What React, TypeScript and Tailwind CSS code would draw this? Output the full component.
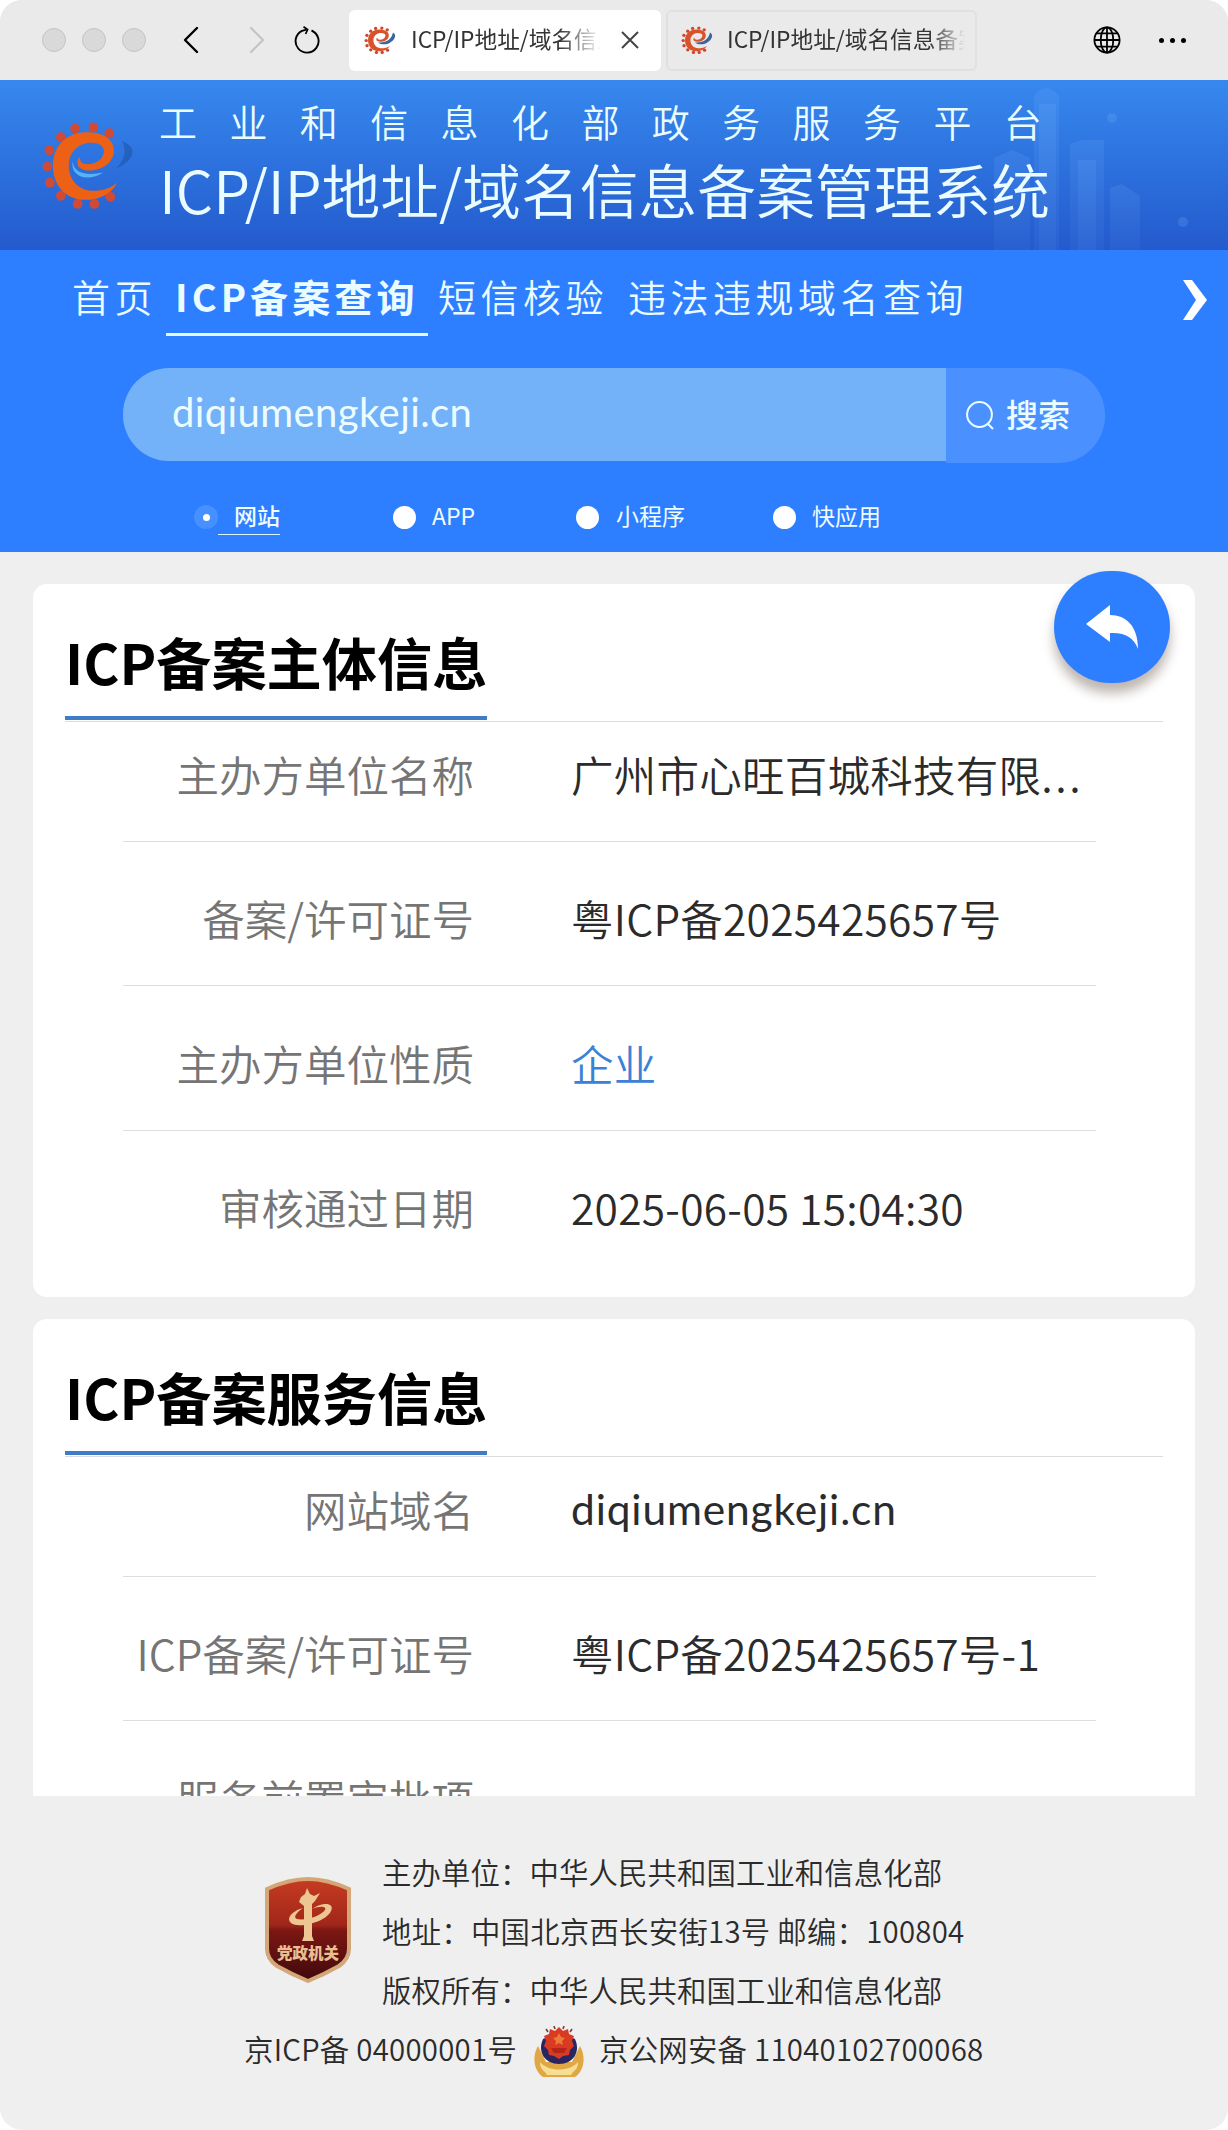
import React from 'react'
import { ChevronLeft, ChevronRight } from 'lucide-react'
import clsx from 'clsx'

interface Field {
    label: string
    value?: string
    link?: boolean
    domain?: boolean
    clipped?: boolean
}

const subjectFields: Field[] = [
    { label: '主办方单位名称', value: '广州市心旺百城科技有限', clipped: true },
    { label: '备案/许可证号', value: '粤ICP备2025425657号' },
    { label: '主办方单位性质', value: '企业', link: true },
    { label: '审核通过日期', value: '2025-06-05 15:04:30' },
]

const serviceFields: Field[] = [
    { label: '网站域名', value: 'diqiumengkeji.cn', domain: true },
    { label: 'ICP备案/许可证号', value: '粤ICP备2025425657号-1' },
    { label: '服务前置审批项' },
]

// Teeth of the gear around the "e", open on the right side
const teeth = [
    [62, 9], [46, 3.5], [27.5, 4.5], [13, 13], [1.5, 26], [-0.5, 42],
    [2, 58], [13, 71], [30, 79], [47, 79], [63, 72],
]

function GearLogo({ className, onDark }: { className?: string; onDark?: boolean }) {
    return (
        <svg viewBox="-7 -3 98 90" preserveAspectRatio="none" className={className}>
            <g fill={onDark ? '#cf4a37' : '#d0452c'}>
                {teeth.map(([x, y]) => (
                    <circle key={`${x}-${y}`} cx={x} cy={y} r="4.9" />
                ))}
            </g>
            <path
                d="M70 58C64 70 50 75 38 75C16 75 5 59 5 41C5 22 19 8.5 38 8.2C56 8 67 15 66.6 27C66 40 52 46.5 41 46C31 45.5 27 40 32 32C32 38 36 40 42 39.5C51 39 57 33 56.5 26C56 20 49 18 41 18.5C29 20 21 29 21 41C21 55 31 65.5 44 66C54 66 63 64 70 58Z"
                fill={onDark ? '#ec6116' : '#d9532a'}
            />
            {onDark ? (
                <>
                    <path d="M25 36C25 47 36 52 56 48C40 58 22 52 25 36Z" fill="#56b4f5" />
                    <path d="M75 17C83 20 87 24 85 30C83 37 76 41 69 44C77 36 80 27 75 17Z" fill="#174f9e" opacity=".5" />
                </>
            ) : (
                <path d="M34 48C60 50 76 36 79 17C92 24 84 44 66 51C54 56 42 54 34 48Z" fill="#3c659f" />
            )}
        </svg>
    )
}

function BrowserTab({ active }: { active?: boolean }) {
    return (
        <div
            className={clsx(
                'flex h-[61px] items-center rounded-md',
                active ? 'w-[312px] bg-white pl-[15px]' : 'w-[311px] border-2 border-[#e0e0e0] pl-[13px]'
            )}
        >
            <GearLogo className="h-[29px] w-[33px] shrink-0" />
            <span
                className={clsx(
                    "overflow-hidden pb-[3px] font-['Noto_Sans_CJK_SC'] text-[22.7px] leading-[34px] whitespace-nowrap text-[#333]",
                    active
                        ? 'ml-[14px] w-[190px] [mask-image:linear-gradient(to_right,#000_78%,transparent)]'
                        : 'ml-[13px] w-[238px] [mask-image:linear-gradient(to_right,#000_85%,transparent)]'
                )}
            >
                ICP/IP地址/域名信息备案
            </span>
            {active && (
                <svg viewBox="0 0 18 18" className="ml-[20px] h-[18px] w-[18px]" stroke="#444" strokeWidth="2" fill="none">
                    <path d="M1 1 17 17M17 1 1 17" />
                </svg>
            )}
        </div>
    )
}

function BrowserBar() {
    return (
        <div className="flex h-20 items-center bg-[#eaeaea]">
            <div className="ml-[42px] flex gap-4">
                {[0, 1, 2].map((i) => (
                    <span key={i} className="h-6 w-6 rounded-full border border-[#c3c3c3] bg-[#d9d9d9]" />
                ))}
            </div>
            <ChevronLeft className="ml-[21px] h-[48px] w-[48px]" strokeWidth={1.2} color="#000" />
            <ChevronRight className="ml-[18px] h-[48px] w-[48px]" strokeWidth={1.1} color="#c4c4c4" />
            <svg viewBox="0 0 26 28" className="ml-[13px] h-[28px] w-[26px]" fill="none" stroke="#000" strokeWidth="1.9">
                <path d="M17.5 4.5A11.5 11.5 0 1 1 8 4.8L12.5 3.6" />
                <path d="M9.5 0.8 13.6 3.6 11.6 8" strokeWidth="1.7" />
            </svg>
            <div className="ml-[29px] flex gap-[5px]">
                <BrowserTab active />
                <BrowserTab />
            </div>
            <svg viewBox="0 0 28 28" className="ml-[116px] h-[28px] w-[28px]" fill="none" stroke="#000" strokeWidth="1.8">
                <circle cx="14" cy="14" r="12.6" />
                <ellipse cx="14" cy="14" rx="6.3" ry="12.6" />
                <path d="M14 1.4V26.6M1.4 14H26.6M3.5 7.3H24.5M3.5 20.7H24.5" />
            </svg>
            <div className="ml-[38px] flex gap-[6px]">
                {[0, 1, 2].map((i) => (
                    <span key={i} className="h-[5px] w-[5px] rounded-full bg-black" />
                ))}
            </div>
        </div>
    )
}

// Faint skyline behind the right end of the banner
function Skyline() {
    return (
        <svg viewBox="0 0 240 170" className="absolute right-0 top-0 h-[170px] w-[240px]">
            <defs>
                <linearGradient id="tower" x1="0" y1="0" x2="0" y2="1">
                    <stop offset="0" stopColor="#7db8ff" stopOpacity=".14" />
                    <stop offset="1" stopColor="#7db8ff" stopOpacity=".06" />
                </linearGradient>
            </defs>
            <g fill="url(#tower)">
                <path d="M46 170V16Q58 0 71 16V170Z" />
                <path d="M51 170V24H68V170Z" />
                <path d="M6 170V78L24 70 42 78V170Z" />
                <path d="M82 170V64L94 60 116 60V170Z" />
                <path d="M90 170V80H108V170Z" />
                <path d="M122 170V108L134 104 152 116V170Z" />
            </g>
            <g fill="#7db8ff" opacity=".2">
                <circle cx="124" cy="38" r="5" />
                <circle cx="195" cy="142" r="5" />
            </g>
        </svg>
    )
}

function Banner() {
    return (
        <header className="relative flex h-[170px] bg-linear-to-b from-[#3788ee] to-[#245acd]">
            <Skyline />
            <GearLogo onDark className="mt-[41px] ml-[41px] h-[91px] w-[97px]" />
            <div className="relative ml-[21px] whitespace-nowrap text-[#eafcff]">
                <p className="mt-[19px] text-[38px] leading-[44px] tracking-[32.4px]">工业和信息化部政务服务平台</p>
                <h1 className="mt-[11px] text-[58.8px] leading-[70px]">ICP/IP地址/域名信息备案管理系统</h1>
            </div>
        </header>
    )
}

function Nav() {
    return (
        <nav className="flex h-[86px] text-[38px] leading-[56px] tracking-[4.5px] whitespace-nowrap text-[#eafcff]">
            <a className="mt-[18px] ml-[72px] w-[94px]">首页</a>
            <a className="mt-[18px] h-[68px] w-[262px] border-b-[3px] border-[#e2faff] pl-[9px] font-['Noto_Sans_CJK_SC'] font-bold tracking-[4.1px]">
                ICP备案查询
            </a>
            <a className="mt-[18px] ml-[10px] w-[190px]">短信核验</a>
            <a className="mt-[18px]">违法违规域名查询</a>
            <svg viewBox="0 0 24 40" className="mt-[30px] mr-[21px] ml-auto h-[40px] w-[24px]" fill="#fff">
                <path d="M0 0H9L24 20 9 40H0L13 20Z" />
            </svg>
        </nav>
    )
}

function SearchBox() {
    return (
        <div className="mt-[32px] ml-[123px] flex text-[#ecfdff]">
            <div className="h-[93px] w-[823px] rounded-l-[46px] bg-[#73b1f8] pl-[49px] font-[Lato] text-[40px] leading-[88px] tracking-[0.4px]">
                diqiumengkeji.cn
            </div>
            <button className="flex h-[95px] w-[159px] items-center rounded-r-[47px] bg-[#4b90ff] pl-[20px] font-['Noto_Sans_CJK_SC'] text-[32px] font-medium">
                <svg viewBox="0 0 28 29" className="h-[29px] w-[28px]" fill="none" stroke="currentColor" strokeWidth="2">
                    <circle cx="13.5" cy="13.5" r="12.4" />
                    <path d="M21.5 22.5 27 28" />
                </svg>
                <span className="ml-[12px] pb-[6px] leading-[50px]">搜索</span>
            </button>
        </div>
    )
}

function ServiceTypes() {
    return (
        <div className="mt-[36px] flex h-[36px] items-center font-['Noto_Sans_CJK_SC'] text-[23px] leading-[30px] whitespace-nowrap text-[#f0fdff]">
            <span className="ml-[194px] flex h-6 w-6 items-center justify-center rounded-full bg-[#4690ff]">
                <span className="h-[7px] w-[7px] rounded-full bg-white" />
            </span>
            <span className="w-[62px] border-b border-[#d8f6ff] pb-[4px] pl-[16px] font-medium">网站</span>
            <span className="ml-[113px] h-[23px] w-[23px] rounded-full bg-white" />
            <span className="ml-[16px] w-[144px] pb-[4px]">APP</span>
            <span className="h-[23px] w-[23px] rounded-full bg-white" />
            <span className="ml-[17px] w-[157px] pb-[4px]">小程序</span>
            <span className="h-[23px] w-[23px] rounded-full bg-white" />
            <span className="ml-[16px] pb-[4px]">快应用</span>
        </div>
    )
}

function InfoCard({ title, fields, className }: { title: string; fields: Field[]; className: string }) {
    return (
        <section className={clsx('overflow-hidden bg-white px-[32px]', className)}>
            <div className="flex h-[138px] border-b border-[#d9dde0]">
                <h2 className="h-[136px] w-[422px] border-b-4 border-[#3f7cc4] pt-[42px] font-['Noto_Sans_CJK_SC'] text-[55.2px] leading-[70px] font-bold whitespace-nowrap text-black">
                    {title}
                </h2>
            </div>
            <dl className="mr-[67px] ml-[58px] text-[42.5px] leading-[60px] whitespace-nowrap">
                {fields.map((field, i) => (
                    <div
                        key={field.label}
                        className={clsx(
                            'flex items-end border-b border-[#dedede] pb-[37px] last:border-transparent',
                            i === 0 ? 'h-[119.5px]' : 'h-[144.5px]'
                        )}
                    >
                        <dt className="w-[351px] text-right text-[#757575]">{field.label}</dt>
                        <dd className={clsx('ml-[97px] tracking-[0.25px]', field.link ? 'text-[#3b82d6]' : 'text-[#2b2b2b]')}>
                            <span className={clsx(field.domain && 'font-[Lato] tracking-[0.85px]')}>{field.value}</span>
                            {field.clipped && <span className="tracking-[2.6px]">...</span>}
                        </dd>
                    </div>
                ))}
            </dl>
        </section>
    )
}

function BackButton() {
    return (
        <button className="absolute top-[19px] right-[58px] flex h-[112px] w-[116px] items-center justify-center rounded-full bg-[#2e7fff] shadow-[0_10px_12px_rgba(90,70,60,0.4)]">
            <svg viewBox="0 0 52 44" className="h-[44px] w-[52px]" fill="#fff">
                <path d="M0 19 24 0V10C40 10 52 21 52 44C48 32 38 27 24 28V37Z" />
            </svg>
        </button>
    )
}

function PartyShield() {
    return (
        <svg viewBox="0 0 86 106" className="h-[106px] w-[86px]">
            <defs>
                <linearGradient id="shield" x1="0" y1="0" x2="0" y2="1">
                    <stop offset="0" stopColor="#c63c20" />
                    <stop offset=".45" stopColor="#a1261a" />
                    <stop offset=".5" stopColor="#7d1713" />
                    <stop offset="1" stopColor="#3f090c" />
                </linearGradient>
            </defs>
            <path
                d="M2 12Q24 2 43 2T84 12V72Q84 82 74 89Q58 98 43 104Q28 98 12 89Q2 82 2 72Z"
                fill="url(#shield)" stroke="#d3a777" strokeWidth="4"
            />
            <path d="M36 20 40 17 42 11 45 17 49 19 55 16 50 24 47 27V59L49 64H37L39 59V29L34 25Z" fill="#edc694" />
            <path
                d="M47 32C58 24 70 26 66 34C61 45 34 52 26 46C20 40 30 33 38 31C31 36 28 40 32 42C40 44 56 39 60 33C62 29 54 29 47 32Z"
                fill="#edc694"
            />
            <text x="43" y="82" textAnchor="middle" className="fill-[#e8bf92] font-['Noto_Sans_CJK_SC'] text-[15.5px] font-black">
                党政机关
            </text>
        </svg>
    )
}

function PoliceBadge() {
    return (
        <svg viewBox="0 0 50 52" className="mt-[6px] h-[52px] w-[50px]">
            <path d="M4 20C-3 32 1 46 9 51H41C49 46 53 32 46 20L38 36H12Z" fill="#dfa844" />
            <path d="M6 36C14 46 36 46 44 36C44 41 42 44 39 46L37 49H13L11 46C8 44 6 41 6 36Z" fill="#f6de93" />
            <path d="M9 13C3 26 11 38 25 38S47 26 41 13L25 6Z" fill="#2a2560" />
            <path d="M25 1 29 5 34 3 35 8 40 10 38 15 40 20 36 24 35 29 29 30 25 33 20 30 15 29 14 24 10 20 12 15 10 10 15 8 16 3 21 5Z" fill="#d93a22" />
            <path d="M25 7 27 11 31 12 28 15 29 19 25 17 21 19 22 15 19 12 23 11Z" fill="#ee7a3a" />
            <path d="M17 22H33L30 27H20Z" fill="#b52418" />
            <path d="M14 6 12 3M21 3 20 0M29 3 30 0M36 6 38 3" stroke="#7a3a3a" strokeWidth="1.6" />
        </svg>
    )
}

function Footer() {
    return (
        <footer className="pt-[46px] text-[29.4px] leading-[59px] whitespace-nowrap text-[#2b2b2b]">
            <div className="flex">
                <div className="mt-[35px] ml-[265px]">
                    <PartyShield />
                </div>
                <div className="ml-[31px] tracking-[0.1px]">
                    <p>主办单位：中华人民共和国工业和信息化部</p>
                    <p className="tracking-[0.25px]">地址：中国北京西长安街13号 邮编：100804</p>
                    <p>版权所有：中华人民共和国工业和信息化部</p>
                </div>
            </div>
            <div className="ml-[244px] flex h-[59px] items-center tracking-[0.25px]">
                <span className="w-[290px]">京ICP备 04000001号</span>
                <PoliceBadge />
                <span className="ml-[15px]">京公网安备 11040102700068</span>
            </div>
        </footer>
    )
}

export default function App() {
    return (
        <div className="w-full bg-white">
            <div className="h-[2130px] w-full overflow-hidden rounded-[22px] bg-[#efefef] font-['Noto_Sans_CJK_SC_DemiLight','Noto_Sans_CJK_SC',sans-serif]">
                <BrowserBar />
                <Banner />
                <div className="h-[302px] bg-[#2e7fff]">
                    <Nav />
                    <SearchBox />
                    <ServiceTypes />
                </div>
                <main className="relative px-[33px] pt-[32px]">
                    <InfoCard title="ICP备案主体信息" fields={subjectFields} className="h-[713px] rounded-[14px]" />
                    <InfoCard title="ICP备案服务信息" fields={serviceFields} className="mt-[22px] h-[477px] rounded-t-[14px]" />
                    <BackButton />
                </main>
                <Footer />
            </div>
        </div>
    )
}
